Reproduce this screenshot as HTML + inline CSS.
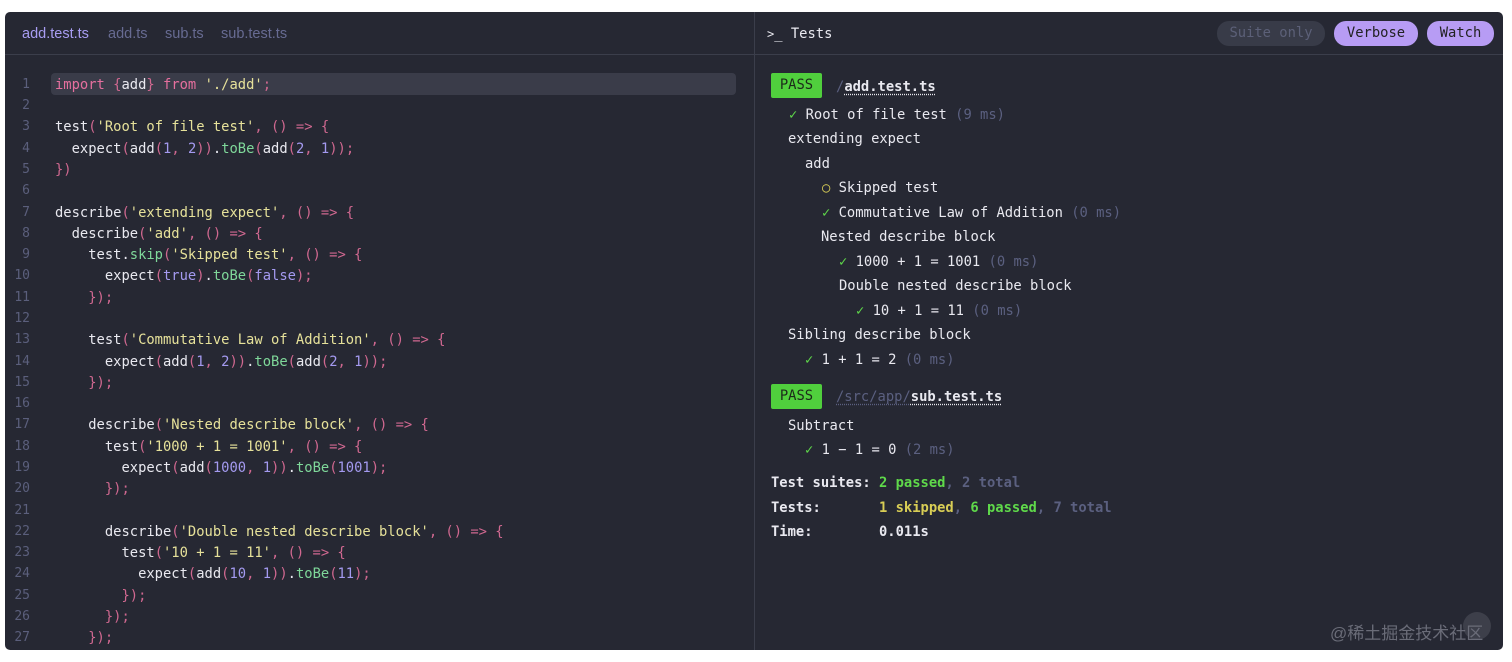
<!DOCTYPE html>
<html><head><meta charset="utf-8"><style>
*{margin:0;padding:0;box-sizing:border-box}
body{width:1512px;height:662px;background:#fff;position:relative;overflow:hidden;font-family:"DejaVu Sans Mono","Liberation Mono",monospace}
#box{position:absolute;left:5px;top:12px;width:1498px;height:638px;background:#262833;border-radius:5px;overflow:hidden}
.hdr{position:absolute;left:0;top:0;width:1498px;height:43px;border-bottom:1px solid #3b3e4b}
.vdiv{position:absolute;left:749px;top:0;width:1px;height:638px;background:#3b3e4b}
.tab{position:absolute;top:14px;font:14.5px "Liberation Sans",sans-serif;color:#676b92}
.ln{position:absolute;left:0;width:25px;text-align:right;font-size:13px;color:#5b5f7c;line-height:20px;margin-top:1px}
.cl{position:absolute;left:50px;font-size:13.8px;line-height:20px;color:#e9e9f0;white-space:pre;margin-top:1px}
.k{color:#e56f9e}.s{color:#e6e19a}.n{color:#a49af0}.f{color:#7fd89a}.p{color:#d06890}
.r{position:absolute;font-size:13.8px;line-height:20px;color:#e9e9f0;white-space:pre;margin-top:1px}
.g{color:#5fd94a}.d{color:#5b6080}.y{color:#d8cd55}
.btn{position:absolute;top:9px;height:25px;border-radius:12px;font-size:13.8px;line-height:25px;text-align:center}
.pass{position:absolute;left:766px;width:51px;height:25px;background:#50cf3d;color:#1c2a1a;font-size:13.8px;line-height:25px;text-align:center;border-radius:2px}
u{text-decoration:underline dotted;text-underline-offset:3px}
</style></head><body>
<div id="box">
<div class="hdr"></div>
<div class="vdiv"></div>
<span class="tab" style="left:17px;color:#a89df2">add.test.ts</span>
<span class="tab" style="left:103px">add.ts</span>
<span class="tab" style="left:160px">sub.ts</span>
<span class="tab" style="left:216px">sub.test.ts</span>
<div style="position:absolute;left:46px;top:61px;width:685px;height:22px;background:#3a3c49;border-radius:4px"></div>
<div class="ln" style="top:62px">1</div><div class="cl" style="top:62px"><span class="k">import</span> <span class="p">{</span>add<span class="p">}</span> <span class="k">from</span> <span class="s">'./add'</span><span class="p">;</span></div>
<div class="ln" style="top:83px">2</div>
<div class="ln" style="top:104px">3</div><div class="cl" style="top:104px">test<span class="p">(</span><span class="s">'Root of file test'</span><span class="p">, () =&gt; {</span></div>
<div class="ln" style="top:126px">4</div><div class="cl" style="top:126px">  expect<span class="p">(</span>add<span class="p">(</span><span class="n">1</span><span class="p">,</span> <span class="n">2</span><span class="p">))</span>.<span class="f">toBe</span><span class="p">(</span>add<span class="p">(</span><span class="n">2</span><span class="p">,</span> <span class="n">1</span><span class="p">));</span></div>
<div class="ln" style="top:147px">5</div><div class="cl" style="top:147px"><span class="p">})</span></div>
<div class="ln" style="top:168px">6</div>
<div class="ln" style="top:190px">7</div><div class="cl" style="top:190px">describe<span class="p">(</span><span class="s">'extending expect'</span><span class="p">, () =&gt; {</span></div>
<div class="ln" style="top:211px">8</div><div class="cl" style="top:211px">  describe<span class="p">(</span><span class="s">'add'</span><span class="p">, () =&gt; {</span></div>
<div class="ln" style="top:232px">9</div><div class="cl" style="top:232px">    test.<span class="f">skip</span><span class="p">(</span><span class="s">'Skipped test'</span><span class="p">, () =&gt; {</span></div>
<div class="ln" style="top:253px">10</div><div class="cl" style="top:253px">      expect<span class="p">(</span><span class="n">true</span><span class="p">)</span>.<span class="f">toBe</span><span class="p">(</span><span class="n">false</span><span class="p">);</span></div>
<div class="ln" style="top:275px">11</div><div class="cl" style="top:275px"><span class="p">    });</span></div>
<div class="ln" style="top:296px">12</div>
<div class="ln" style="top:317px">13</div><div class="cl" style="top:317px">    test<span class="p">(</span><span class="s">'Commutative Law of Addition'</span><span class="p">, () =&gt; {</span></div>
<div class="ln" style="top:339px">14</div><div class="cl" style="top:339px">      expect<span class="p">(</span>add<span class="p">(</span><span class="n">1</span><span class="p">,</span> <span class="n">2</span><span class="p">))</span>.<span class="f">toBe</span><span class="p">(</span>add<span class="p">(</span><span class="n">2</span><span class="p">,</span> <span class="n">1</span><span class="p">));</span></div>
<div class="ln" style="top:360px">15</div><div class="cl" style="top:360px"><span class="p">    });</span></div>
<div class="ln" style="top:381px">16</div>
<div class="ln" style="top:402px">17</div><div class="cl" style="top:402px">    describe<span class="p">(</span><span class="s">'Nested describe block'</span><span class="p">, () =&gt; {</span></div>
<div class="ln" style="top:424px">18</div><div class="cl" style="top:424px">      test<span class="p">(</span><span class="s">'1000 + 1 = 1001'</span><span class="p">, () =&gt; {</span></div>
<div class="ln" style="top:445px">19</div><div class="cl" style="top:445px">        expect<span class="p">(</span>add<span class="p">(</span><span class="n">1000</span><span class="p">,</span> <span class="n">1</span><span class="p">))</span>.<span class="f">toBe</span><span class="p">(</span><span class="n">1001</span><span class="p">);</span></div>
<div class="ln" style="top:466px">20</div><div class="cl" style="top:466px"><span class="p">      });</span></div>
<div class="ln" style="top:488px">21</div>
<div class="ln" style="top:509px">22</div><div class="cl" style="top:509px">      describe<span class="p">(</span><span class="s">'Double nested describe block'</span><span class="p">, () =&gt; {</span></div>
<div class="ln" style="top:530px">23</div><div class="cl" style="top:530px">        test<span class="p">(</span><span class="s">'10 + 1 = 11'</span><span class="p">, () =&gt; {</span></div>
<div class="ln" style="top:551px">24</div><div class="cl" style="top:551px">          expect<span class="p">(</span>add<span class="p">(</span><span class="n">10</span><span class="p">,</span> <span class="n">1</span><span class="p">))</span>.<span class="f">toBe</span><span class="p">(</span><span class="n">11</span><span class="p">);</span></div>
<div class="ln" style="top:573px">25</div><div class="cl" style="top:573px"><span class="p">        });</span></div>
<div class="ln" style="top:594px">26</div><div class="cl" style="top:594px"><span class="p">      });</span></div>
<div class="ln" style="top:615px">27</div><div class="cl" style="top:615px"><span class="p">    });</span></div>

<div class="r" style="left:762px;top:11px"><span style="font-size:12px">&gt;</span>_ Tests</div>
<div class="btn" style="left:1212px;width:108px;background:#383b48;color:#5c6078">Suite only</div>
<div class="btn" style="left:1329px;width:84px;background:#b79cf4;color:#222">Verbose</div>
<div class="btn" style="left:1422px;width:67px;background:#b79cf4;color:#222">Watch</div>

<div class="pass" style="top:61px">PASS</div>
<div class="r" style="left:831px;top:64px"><span class="d">/</span><u style="font-weight:bold">add.test.ts</u></div>
<div class="r" style="left:784px;top:92px"><span class="g">✓</span> Root of file test <span class="d">(9 ms)</span></div>
<div class="r" style="left:783px;top:116px">extending expect</div>
<div class="r" style="left:800px;top:141px">add</div>
<div class="r" style="left:817px;top:165px"><span class="y">○</span> Skipped test</div>
<div class="r" style="left:817px;top:190px"><span class="g">✓</span> Commutative Law of Addition <span class="d">(0 ms)</span></div>
<div class="r" style="left:816px;top:214px">Nested describe block</div>
<div class="r" style="left:834px;top:239px"><span class="g">✓</span> 1000 + 1 = 1001 <span class="d">(0 ms)</span></div>
<div class="r" style="left:834px;top:263px">Double nested describe block</div>
<div class="r" style="left:851px;top:288px"><span class="g">✓</span> 10 + 1 = 11 <span class="d">(0 ms)</span></div>
<div class="r" style="left:783px;top:312px">Sibling describe block</div>
<div class="r" style="left:800px;top:337px"><span class="g">✓</span> 1 + 1 = 2 <span class="d">(0 ms)</span></div>

<div class="pass" style="top:372px">PASS</div>
<div class="r" style="left:831px;top:374px"><u class="d">/src/app/</u><u style="font-weight:bold">sub.test.ts</u></div>
<div class="r" style="left:783px;top:403px">Subtract</div>
<div class="r" style="left:800px;top:427px"><span class="g">✓</span> 1 − 1 = 0 <span class="d">(2 ms)</span></div>
<div class="r" style="left:766px;top:460px;font-weight:bold">Test suites: <span class="g">2 passed</span><span class="d">, 2 total</span></div>
<div class="r" style="left:766px;top:485px;font-weight:bold">Tests:       <span class="y">1 skipped</span><span class="d">,</span> <span class="g">6 passed</span><span class="d">, 7 total</span></div>
<div class="r" style="left:766px;top:509px;font-weight:bold">Time:        0.011s</div>
<div style="position:absolute;left:1458px;top:600px;width:28px;height:28px;border-radius:50%;background:#3d3f4a"></div>
<div style="position:absolute;left:1325px;top:607px;font:17px 'Liberation Sans','Noto Sans CJK SC',sans-serif;color:#6a6c78">@稀土掘金技术社区</div>
</div>
</body></html>
